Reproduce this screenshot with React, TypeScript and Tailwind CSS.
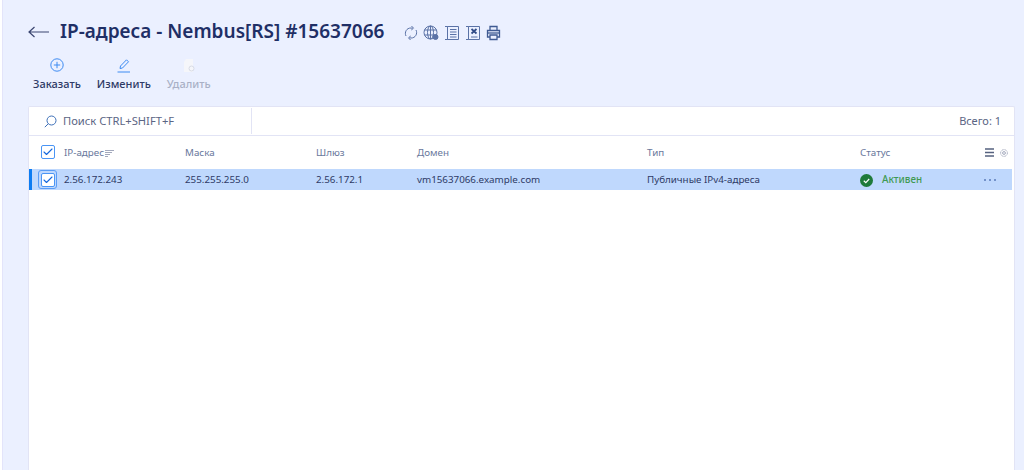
import { Check } from 'lucide-react';

const font = "font-['Noto_Sans','Open_Sans',sans-serif]";

function RowIcon({ width = 16, children }: { width?: number; children: React.ReactNode }) {
  return (
    <svg width={width} height="16" viewBox={`0 0 ${width} 16`} fill="none" stroke="#5a72a6" strokeWidth="1" className="shrink-0">
      {children}
    </svg>
  );
}

function Checkbox() {
  return (
    <span className="flex h-[14px] w-[14px] items-center justify-center rounded-[2px] border-[1.5px] border-[#4a95f5] bg-white">
      <Check size={12} strokeWidth={2.2} className="text-[#1668dc]" />
    </span>
  );
}

function ToolButton({ label, disabled, children }: { label: string; disabled?: boolean; children: React.ReactNode }) {
  return (
    <div className="flex flex-col items-center">
      <div className="flex h-[20px] items-center">{children}</div>
      <span className={`mt-[1px] text-[11px] leading-[16px] font-medium ${disabled ? 'text-[#a9b0c6]' : 'text-[#2e3a66]'}`}>{label}</span>
    </div>
  );
}

const columns = [
  { title: 'Маска', value: '255.255.255.0', w: 'w-[131px]' },
  { title: 'Шлюз', value: '2.56.172.1', w: 'w-[101px]' },
  { title: 'Домен', value: 'vm15637066.example.com', w: 'w-[230px]' },
  { title: 'Тип', value: 'Публичные IPv4-адреса', w: 'w-[213px]' },
];

export default function App() {
  return (
    <div className={`flex h-[470px] w-[1024px] overflow-hidden bg-white ${font}`}>
      <div className="ml-[2px] flex-1 border-l border-[#e3e4fa] bg-[#ebf0ff] pr-[9px] pl-[25px]">
        <div className="flex h-[52px] items-end pb-[8px]">
          <svg width="22" height="12" viewBox="0 0 22 12" fill="none" stroke="#3a4570" strokeWidth="1.2" className="mb-[6px]">
            <path d="M21 6H1M6.5 1 1 6l5.5 5" />
          </svg>
          <h1 className="ml-[10px] text-[19px] leading-[26px] font-semibold whitespace-nowrap text-[#1f2f66]">IP-адреса - Nembus[RS] #15637066</h1>
          <div className="mb-[3px] ml-[20px] flex items-center gap-[5px]">
            <RowIcon width={14}>
              <path d="M2 11C.2 7.5 2.5 2.8 7 3l1.500.3M12 5c1.800 3.500-.5 8.200-5 8l-1.500-.3M7.500 1l2 2.200-2.200 1.800M6.500 15l-2-2.200L6.700 11" />
            </RowIcon>
            <RowIcon>
              <circle cx="7.500" cy="7.500" r="6.500" />
              <ellipse cx="7.500" cy="7.500" rx="3" ry="6.500" />
              <path d="M1.500 5h12M1.500 10h12M7.500 1v13" />
              <circle cx="12.500" cy="12" r="2.500" fill="#5a72a6" />
            </RowIcon>
            <RowIcon>
              <path d="M3.500 1.500h11v13h-11zM1 1.500h2.500v1.500M1 14.500h2.500V13M6 4.500h6.500M6 7h6.500M6 9.500h6.500M6 12h6.500" />
            </RowIcon>
            <RowIcon>
              <path d="M3.500 1.500h11v13h-11zM1 1.500h2.500v1.500M1 14.500h2.500V13M6 12h6.500" />
              <path d="m6.500 4 5 4.500m0-4.500-5 4.500" stroke="#2f4a86" strokeWidth="1.700" />
            </RowIcon>
            <RowIcon width={15}>
              <path d="M4 5V1.500h7V5M4 12H1.500V5.500h12V12H11M4 10h7v4.500H4z" stroke="#3f5a92" strokeWidth="1.300" />
              <path d="M1.500 8h12" stroke="#3f5a92" strokeWidth="1.300" />
            </RowIcon>
          </div>
        </div>
        <div className="flex h-[54px] gap-[16px] pt-[3px] pl-[5px]">
          <ToolButton label="Заказать">
            <svg width="14" height="14" viewBox="0 0 14 14" fill="none" stroke="#3d8bf2" strokeWidth="1">
              <circle cx="7" cy="7" r="6.200" />
              <path d="M7 3.800v6.400M3.800 7h6.400" />
            </svg>
          </ToolButton>
          <ToolButton label="Изменить">
            <svg width="14" height="15" viewBox="0 0 14 15" fill="none" stroke="#3d8bf2" strokeWidth="1">
              <path d="M3 10.500 3.500 8l6-6.200 2 2-6 6.200zM.5 14h12.500" />
            </svg>
          </ToolButton>
          <ToolButton label="Удалить" disabled>
            <svg width="14" height="15" viewBox="0 0 14 15">
              <path d="M4 1h7v13H2V4z" fill="#f5f6fa" />
              <circle cx="9.500" cy="10.500" r="2.500" fill="#f5f6fa" stroke="#cfd3de" strokeWidth="0.800" />
            </svg>
          </ToolButton>
        </div>
        <main className="h-[364px] rounded-t-[2px] border border-b-0 border-[#e2e4f5] bg-white text-[#2e3a66]">
          <div className="flex h-[29px] items-center border-b border-[#e2e4f5]">
            <div className="flex h-[26px] w-[223px] items-center border-r border-[#e2e4f5] pl-[15px]">
              <svg width="13" height="13" viewBox="0 0 13 13" fill="none" stroke="#3d6fb8" strokeWidth="1">
                <circle cx="7.500" cy="5.500" r="4.500" />
                <path d="M4.300 8.700.8 12.200" />
              </svg>
              <span className="ml-[6px] text-[11.200px] text-[#5b6584]">Поиск CTRL+SHIFT+F</span>
            </div>
            <span className="mr-[13px] ml-auto text-[11px] text-[#5b6584]">Всего: 1</span>
          </div>
          <div className="flex h-[33px] items-center text-[9.800px] text-[#69789c]">
            <div className="flex w-[35px] justify-center pb-[2px] pl-[3px]">
              <Checkbox />
            </div>
            <div className="flex w-[121px] items-center pt-[1px]">
              <span>IP-адрес</span>
              <svg width="9" height="9" viewBox="0 0 9 9" stroke="#8b93ab" strokeWidth="0.800" className="ml-[1px]">
                <path d="M0 1.500h9M0 3.500h7M0 5.500h5M0 7.500h3" />
              </svg>
            </div>
            {columns.map((c) => (
              <div key={c.title} className={`${c.w} pt-[1px]`}>{c.title}</div>
            ))}
            <div className="w-[125px] pt-[1px]">Статус</div>
            <svg width="9" height="9" viewBox="0 0 9 9" stroke="#56627f" strokeWidth="1.400">
              <path d="M0 1h9M0 4.500h9M0 8h9" />
            </svg>
            <svg width="8" height="8" viewBox="0 0 8 8" fill="none" stroke="#8b93ab" strokeWidth="0.800" className="ml-[6px]">
              <circle cx="4" cy="4" r="3.400" strokeDasharray="1 0.500" />
              <circle cx="4" cy="4" r="1.400" />
            </svg>
          </div>
          <div className="mr-[2px] flex h-[21px] items-center border-l-[3px] border-[#0d7cf2] bg-[#bfd8fd] text-[9.800px] text-[#2e3a66]">
            <div className="flex w-[32px] pl-[6px]">
              <span className="flex h-[19px] w-[19px] items-center justify-center rounded-[3px] border border-[#5b9df5]">
                <Checkbox />
              </span>
            </div>
            <div className="w-[121px] pt-[1px]">2.56.172.243</div>
            {columns.map((c) => (
              <div key={c.title} className={`${c.w} pt-[1px]`}>{c.value}</div>
            ))}
            <div className="flex w-[124px] items-center pt-[1px]">
              <svg width="13" height="13" viewBox="0 0 13 13">
                <circle cx="6.500" cy="6.500" r="6.500" fill="#1f7a3a" />
                <path d="m3.800 6.800 2 1.800 3.400-3.600" fill="none" stroke="#fff" strokeWidth="1.200" />
              </svg>
              <span className="ml-[9px] font-medium text-[#3f9a52]">Активен</span>
            </div>
            <span className="flex gap-[3px]">
              <i className="h-[2px] w-[2px] rounded-full bg-[#5a7bb8]" />
              <i className="h-[2px] w-[2px] rounded-full bg-[#5a7bb8]" />
              <i className="h-[2px] w-[2px] rounded-full bg-[#5a7bb8]" />
            </span>
          </div>
        </main>
      </div>
    </div>
  );
}
